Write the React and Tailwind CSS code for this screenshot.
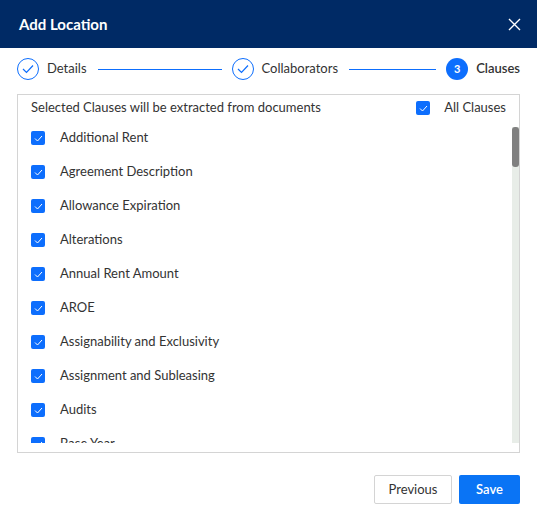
import React from 'react'

const clauses = [
  'Additional Rent',
  'Agreement Description',
  'Allowance Expiration',
  'Alterations',
  'Annual Rent Amount',
  'AROE',
  'Assignability and Exclusivity',
  'Assignment and Subleasing',
  'Audits',
  'Base Year',
]

function Check() {
  return (
    <span className="flex h-[14px] w-[14px] shrink-0 items-center justify-center rounded-[2px] bg-[#0d6efd]">
      <svg width="9" height="7" viewBox="0 0 9 7" fill="none">
        <path d="M1 3.5 L3.5 6 L8 1" stroke="white" strokeWidth="1" />
      </svg>
    </span>
  )
}

// completed step: circle + label + connector line filling the rest
function StepDone({ label }) {
  return (
    <div className="flex flex-1 items-center">
      <span className="flex h-[22px] w-[22px] shrink-0 items-center justify-center rounded-full border border-[#0d6efd]">
        <svg width="12" height="10" viewBox="0 0 12 10" fill="none">
          <path d="M1 5 L4.5 8.5 L11 1.5" stroke="#0d6efd" strokeWidth="1.2" />
        </svg>
      </span>
      <span className="ml-[8px] text-[13px] text-[#333]">{label}</span>
      <div className="ml-[11px] mr-[10px] h-px flex-1 bg-[#0d6efd]" />
    </div>
  )
}

export default function App() {
  return (
    <div className="h-[522px] w-[537px] bg-white font-['Lato',sans-serif]">
      <header className="flex h-[48px] items-center justify-between bg-[#002a65] pl-[19px] pr-[16px]">
        <h1 className="text-[15px] font-bold text-white">Add Location</h1>
        <svg width="13" height="13" viewBox="0 0 13 13" fill="none">
          <path d="M1 1 L12 12 M12 1 L1 12" stroke="white" strokeWidth="1.4" />
        </svg>
      </header>

      <div className="flex h-[41px] items-center pl-[17px] pr-[17px] pt-[1px]">
        <StepDone label="Details" />
        <StepDone label="Collaborators" />
        <div className="flex items-center gap-[8px]">
          <span className="flex h-[22px] w-[22px] items-center justify-center rounded-full bg-[#0d6efd] text-[11px] font-bold text-white">3</span>
          <span className="text-[13px] font-semibold text-[#333]">Clauses</span>
        </div>
      </div>

      <div className="mx-[17px] mt-[5px] flex h-[359px] flex-col border border-[#d4d4d4]">
        <div className="flex h-[26px] shrink-0 items-center justify-between pl-[13px] pr-[13px]">
          <span className="text-[13px] text-[#333]">Selected Clauses will be extracted from documents</span>
          <div className="flex items-center gap-[14px]">
            <Check />
            <span className="text-[13px] text-[#333]">All Clauses</span>
          </div>
        </div>
        <div className="flex h-[322px] shrink-0">
          <div className="flex-1 overflow-hidden">
            {clauses.map((c) => (
              <div key={c} className="flex h-[34px] items-center gap-[15px] pl-[13px]">
                <Check />
                <span className="text-[13px] text-[#333]">{c}</span>
              </div>
            ))}
          </div>
          <div className="mt-[6px] w-[7px] bg-[#e8ede8]">
            <div className="h-[40px] w-full rounded-[3px] bg-[#808080]" />
          </div>
        </div>
      </div>

      <div className="mt-[22px] flex justify-end gap-[7px] pr-[17px]">
        <button className="h-[29px] w-[78px] rounded-[2px] border border-[#d4d4d4] bg-white text-[13px] text-[#333]">Previous</button>
        <button className="h-[29px] w-[61px] rounded-[2px] bg-[#0a74f5] text-[13px] font-semibold text-white">Save</button>
      </div>
    </div>
  )
}
